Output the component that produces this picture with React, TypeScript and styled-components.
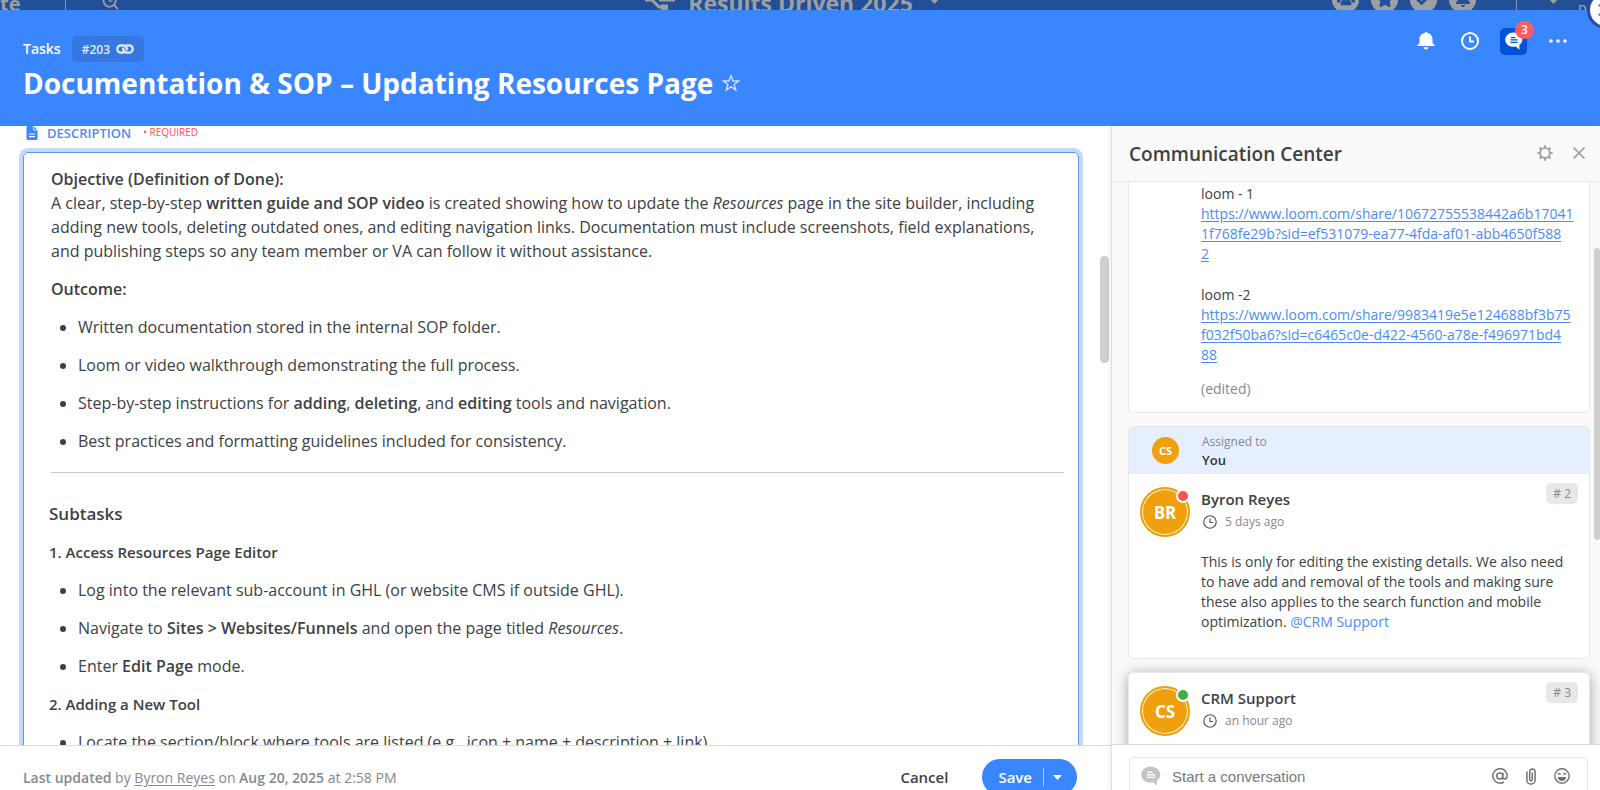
import React from 'react';
import styled, { createGlobalStyle } from 'styled-components';
import {
  FaBell,
  FaCheck,
  FaStar,
  FaUsers,
} from 'react-icons/fa';

const GlobalStyle = createGlobalStyle`
  * { box-sizing: border-box; }
  body {
    margin: 0;
    overflow: hidden;
    font-family: "Open Sans", "Noto Sans", sans-serif;
    color: #3c4145;
    background: #fff;
  }
  button { font-family: inherit; border: 0; padding: 0; background: none; cursor: pointer; }
  h1, h2, h3, h4, p, ul { margin: 0; padding: 0; }
  svg { display: block; flex: none; }
`;

const Page = styled.div`
  height: 100vh;
  display: flex;
  flex-direction: column;
  overflow: hidden;
  position: relative;
`;

/* Dimmed application bar behind the task window */
const TopBar = styled.div`
  flex: 0 0 10px;
  overflow: hidden;
  background: #224f98;
  color: #9c9fa3;
`;

const TopBarInner = styled.div`
  height: 58px;
  margin-top: -26px;
  display: grid;
  grid-template-columns: 1fr auto 1fr;
  align-items: center;
  font-weight: 700;
  font-size: 20px;
`;

const TopGroup = styled.div<{ $gap: number; $end?: boolean }>`
  display: flex;
  align-items: center;
  gap: ${(p) => p.$gap}px;
  justify-content: ${(p) => (p.$end ? 'flex-end' : 'flex-start')};
`;

const Board = styled.div`
  display: flex;
  align-items: center;
  gap: 12px;
  padding-right: 16px;
  font-size: 23px;

  svg:last-child { margin: 0 0 4px 5px; }
`;

const BarDivider = styled.span`
  width: 1px;
  height: 54px;
  background: #7f95bb;
`;

const SearchSlot = styled.span`
  padding: 0 0 4px 20px;
`;

const RoundIcon = styled.span`
  width: 27px;
  height: 27px;
  border-radius: 50%;
  background: #9c9fa3;
  color: #224f98;
  display: grid;
  place-items: center;
  margin-bottom: 8px;
`;

const AccountMenu = styled.div`
  display: flex;
  align-items: center;
  gap: 32px;
  padding: 0 8px 0 28px;

  svg { margin-bottom: 4px; }
`;

const UserSlot = styled.span`
  display: flex;
  flex-direction: column;
  width: 22px;
  overflow: hidden;
  font-size: 12px;
  line-height: 14px;
  font-weight: 600;
`;

const CloseTab = styled.button`
  position: absolute;
  top: -6px;
  right: -22px;
  width: 32px;
  height: 32px;
  border-radius: 50%;
  background: #fff;
  box-shadow: 0 0 0 3px #224f98;
  z-index: 2;
  color: #3a86ff;
  text-align: left;
  padding-left: 8px;
`;

const Header = styled.header`
  flex: 0 0 116px;
  background: #3a86ff;
  color: #fff;
  display: flex;
  justify-content: space-between;
  padding: 16px 29px 0 23px;
`;

const Heading = styled.div`
  padding-top: 10px;
`;

const Crumbs = styled.div`
  display: flex;
  align-items: center;
  gap: 11px;
  font-size: 14px;
  font-weight: 600;
  line-height: 20px;
`;

const IdTag = styled.button`
  height: 26px;
  padding: 0 10px;
  border-radius: 5px;
  background: #3677e0;
  color: #e3edff;
  display: flex;
  align-items: center;
  gap: 6px;
  font-size: 12px;
  font-weight: 600;
`;

const TitleRow = styled.div`
  display: flex;
  align-items: center;
  gap: 9px;
`;

const Title = styled.h1`
  font-size: 28px;
  line-height: 42px;
  font-weight: 700;
`;

const HeaderActions = styled.div`
  display: flex;
  align-items: center;
  height: 30px;
  gap: 17px;
`;

const HeaderButton = styled.button<{ $active?: boolean }>`
  position: relative;
  width: 27px;
  height: 27px;
  border-radius: 5px;
  background: ${(p) => (p.$active ? '#0052d9' : 'transparent')};
  color: #fff;
  display: grid;
  place-items: center;
`;

const Count = styled.span`
  position: absolute;
  top: -7px;
  right: -7px;
  width: 19px;
  height: 18px;
  border-radius: 9px;
  background: #ff5b60;
  color: #fff;
  font-size: 12px;
  font-weight: 600;
  line-height: 18px;
`;

const Body = styled.div`
  flex: 1;
  min-height: 0;
  display: grid;
  grid-template-columns: minmax(0, 1fr) 489px;
`;

const Main = styled.main`
  min-height: 0;
  display: flex;
  flex-direction: column;
  position: relative;
`;

const Scroll = styled.div`
  flex: 1;
  min-height: 0;
  overflow: hidden;
  padding: 0 32px 0 23px;
`;

const FieldLabel = styled.div`
  display: flex;
  align-items: center;
  height: 14px;
  padding-left: 3px;
  color: #4a8cf5;
`;

const FieldName = styled.h2`
  margin-left: 9px;
  font-size: 13px;
  line-height: 14px;
  font-weight: 600;
`;

const Required = styled.span`
  margin-left: 12px;
  padding-bottom: 2px;
  font-size: 10px;
  line-height: 12px;
  font-weight: 500;
  color: #ff4d52;
`;

const Editor = styled.div`
  margin-top: 12px;
  border: 1px solid #5c96f0;
  border-radius: 5px;
  box-shadow: 0 0 0 4px #c2dafc;
  padding: 14px 14px 40px 27px;
  font-size: 16px;
  line-height: 24px;

  strong { font-weight: 600; }
`;

const Text = styled.p`
  margin-bottom: 14px;
`;

const List = styled.ul`
  padding-left: 27px;
  display: flex;
  flex-direction: column;
  gap: 14px;
  list-style: disc;
`;

const Rule = styled.hr`
  border: 0;
  border-top: 1px solid #c8cbcd;
  margin: 19px 0 29px;
`;

const SectionTitle = styled.h3`
  margin: 0 0 14px -2px;
  font-size: 17px;
  line-height: 24px;
  font-weight: 600;
`;

const StepTitle = styled.h4`
  margin: 14px 0 14px -2px;
  font-size: 15px;
  line-height: 24px;
  font-weight: 600;
`;

const Thumb = styled.div<{ $top: number; $right: number; $w: number; $h: number }>`
  position: absolute;
  top: ${(p) => p.$top}px;
  right: ${(p) => p.$right}px;
  width: ${(p) => p.$w}px;
  height: ${(p) => p.$h}px;
  border-radius: 5px;
  background: #cfcfcf;
`;

const Footer = styled.footer`
  flex: none;
  height: 45px;
  border-top: 1px solid #d9dbde;
  display: flex;
  align-items: flex-start;
  justify-content: space-between;
  padding: 13px 34px 0 23px;
  font-size: 14px;
  color: #85898d;
`;

const Updated = styled.p`
  line-height: 38px;

  strong { font-weight: 600; }
  a { color: inherit; text-underline-offset: 2px; }
`;

const FooterActions = styled.div`
  display: flex;
  gap: 34px;
`;

const Cancel = styled.button`
  height: 36px;
  font-size: 15px;
  font-weight: 600;
  color: #3c4145;
`;

const SaveGroup = styled.div`
  display: flex;
  height: 36px;
  border-radius: 18px;
  background: #3a86ff;
  color: #fff;
  align-items: center;
`;

const Save = styled.button`
  color: #fff;
  font-size: 15px;
  font-weight: 600;
  line-height: 18px;
  padding: 0 11px 0 16px;
  border-right: 1px solid #a9cbff;
`;

const SaveMore = styled.button`
  color: #fff;
  padding: 0 15px 0 9px;
`;

const Side = styled.aside`
  min-height: 0;
  display: flex;
  flex-direction: column;
  background: #fafafa;
  border-left: 1px solid #dcdee0;
  box-shadow: -2px 0 4px rgba(0, 0, 0, 0.06);
  position: relative;
`;

const SideHeader = styled.div`
  flex: 0 0 56px;
  display: flex;
  align-items: center;
  justify-content: space-between;
  padding: 0 15px 0 17px;
  border-bottom: 1px solid #e8e9eb;
`;

const SideTitle = styled.h2`
  font-size: 19px;
  line-height: 28px;
  font-weight: 600;
`;

const SideTools = styled.div`
  display: flex;
  align-items: center;
  gap: 20px;
  padding-bottom: 2px;

  button { color: #a2a5a8; }
`;

const Thread = styled.div`
  flex: 1;
  min-height: 0;
  overflow: hidden;
  padding: 0 10px 0 16px;
  display: flex;
  flex-direction: column;
  gap: 13px;
`;

const Card = styled.article<{ $cut?: boolean; $raised?: boolean }>`
  flex: none;
  background: #fff;
  border: 1px solid #e6e8ea;
  border-top-width: ${(p) => (p.$cut ? 0 : 1)}px;
  border-radius: ${(p) => (p.$cut ? '0 0 5px 5px' : '5px')};
  box-shadow: ${(p) => (p.$raised ? '0 2px 14px rgba(0, 0, 0, 0.35)' : 'none')};
  overflow: hidden;
`;

const Message = styled.div`
  padding: 2px 20px 13px 72px;
  font-size: 14px;
  line-height: 20px;
  display: flex;
  flex-direction: column;

  a { color: #4a8cf5; text-underline-offset: 2px; }
  p + p { margin-top: 21px; }
`;

const Edited = styled.span`
  margin-top: 14px;
  color: #85898d;
`;

const Assigned = styled.div`
  display: flex;
  align-items: center;
  height: 47px;
  padding-left: 23px;
  background: #e6efff;
`;

const AssignedText = styled.div`
  margin-left: 23px;
  font-size: 12px;
  line-height: 19px;
  color: #85898d;

  strong { display: block; font-size: 13px; font-weight: 600; color: #2e3336; }
`;

const SmallAvatar = styled.span`
  width: 27px;
  height: 27px;
  border-radius: 50%;
  background: #f0a00c;
  color: #fff;
  font-size: 11px;
  font-weight: 700;
  display: grid;
  place-items: center;
`;

const Entry = styled.div`
  display: flex;
  padding: 13px 11px 0 11px;
`;

const Avatar = styled.span`
  position: relative;
  width: 50px;
  height: 50px;
  border-radius: 50%;
  border: 2px solid #f0a00c;
  background: #f0a00c;
  box-shadow: inset 0 0 0 1px #fff;
  color: #fff;
  font-size: 17px;
  font-weight: 700;
  display: grid;
  place-items: center;
`;

const Presence = styled.i<{ $color: string }>`
  position: absolute;
  top: 0;
  right: -2px;
  width: 14px;
  height: 14px;
  border-radius: 50%;
  border: 2px solid #fff;
  background: ${(p) => p.$color};
`;

const Who = styled.div`
  flex: 1;
  margin-left: 11px;
`;

const Name = styled.h3`
  font-size: 15px;
  line-height: 24px;
  font-weight: 600;
`;

const When = styled.div`
  display: flex;
  align-items: center;
  gap: 8px;
  padding-left: 2px;
  font-size: 12px;
  line-height: 22px;
  color: #85898d;

  svg { color: #4d5256; }
`;

const Num = styled.span`
  height: 21px;
  padding: 0 7px;
  border-radius: 5px;
  margin-top: -4px;
  background: #e8e8e8;
  color: #85898d;
  font-size: 12px;
  line-height: 21px;
`;

const Comment = styled.div`
  padding: 15px 20px 26px 72px;
  font-size: 14px;
  line-height: 20px;

  a { color: #4a8cf5; text-decoration: none; }
`;

const Composer = styled.form`
  flex: none;
  height: 46px;
  background: #fff;
  border-top: 1px solid #d9dbde;
  padding: 12px 12px 0 17px;
`;

const ComposerBox = styled.label`
  display: flex;
  align-items: center;
  height: 38px;
  border: 1px solid #e2e4e6;
  border-radius: 5px;
  padding: 0 17px 0 11px;
  color: #c2c4c6;

  input {
    flex: 1;
    min-width: 0;
    border: 0;
    outline: 0;
    margin-left: 11px;
    padding: 0;
    background: none;
    font: 15px "Liberation Sans", sans-serif;
  }
  input::placeholder { color: #77797c; opacity: 1; }
`;

const ComposerTools = styled.span`
  display: flex;
  align-items: center;
  gap: 18px;

  button { color: #6f7275; }
`;

const ClockIcon = ({ size, stroke = 2 }: { size: number; stroke?: number }) => (
  <svg width={size} height={size} viewBox="0 0 18 18" fill="none" stroke="currentColor" strokeWidth={stroke}>
    <circle cx="9" cy="9" r="8" />
    <path d="M9 4.5V9.6H13" />
  </svg>
);

const LinkIcon = () => (
  <svg width="18" height="10" viewBox="0 0 18 10" fill="none" stroke="currentColor" strokeWidth="2.300" strokeLinecap="round">
    <path d="M7.300 8.700H5A3.700 3.700 0 0 1 5 1.300H6.500C9 1.300 10.600 3 10.800 5.300" />
    <path d="M10.700 1.300H13A3.700 3.700 0 0 1 13 8.700H11.500C9 8.700 7.400 7 7.200 4.700" />
  </svg>
);

const BubbleIcon = ({ size, lines }: { size: number; lines: string }) => (
  <svg width={size} height={size} viewBox="0 0 20 20">
    <path d="M9.500 0.500C4.300 0.500 0.300 4.100 0.300 8.700S4.300 16.500 9.500 16.500C10.400 16.500 11.300 16.400 12.100 16.200L16 19.600V14.300C18 13 19.300 11 19.300 8.700C19.300 4.100 14.900 0.500 9.500 0.500Z" fill="currentColor" />
    <path d="M6.500 6.200H11.500M6 8.800H14M6 11.400H14" stroke={lines} strokeWidth="1.400" />
  </svg>
);

const DotsIcon = () => (
  <svg width="18" height="4" viewBox="0 0 18 4" fill="currentColor">
    <circle cx="2" cy="2" r="1.800" />
    <circle cx="9" cy="2" r="1.800" />
    <circle cx="16" cy="2" r="1.800" />
  </svg>
);

const StarIcon = () => (
  <svg width="18" height="18" viewBox="0 0 18 18" fill="none" stroke="#cfe0ff" strokeWidth="1.400">
    <path d="M9 1.800L11 7H16.400L12.100 10.400L13.700 16L9 12.700L4.300 16L5.900 10.400L1.600 7H7Z" />
  </svg>
);

const FileIcon = () => (
  <svg width="12" height="14" viewBox="0 0 11 14">
    <path d="M1.500 0H7L11 4V12.500A1.500 1.500 0 0 1 9.500 14H1.500A1.500 1.500 0 0 1 0 12.500V1.500A1.500 1.500 0 0 1 1.500 0Z" fill="#3a86ff" />
    <path d="M7 0V4H11" stroke="#fff" fill="none" strokeWidth="0.800" />
    <path d="M2.500 8H8.500M2.500 10.600H8.500" stroke="#fff" strokeWidth="1.100" />
  </svg>
);

const GearIcon = () => (
  <svg width="16" height="16" viewBox="0 0 16 16" fill="none" stroke="currentColor">
    <circle cx="8" cy="8" r="4.900" strokeWidth="1.900" />
    <path d="M8 0.300V3M8 13V15.700M0.300 8H3M13 8H15.700M2.600 2.600L4.400 4.400M11.600 11.600L13.400 13.400M2.600 13.400L4.400 11.600M11.600 4.400L13.400 2.600" strokeWidth="2.200" />
  </svg>
);

const CrossIcon = () => (
  <svg width="12" height="12" viewBox="0 0 12 12" stroke="currentColor" strokeWidth="1.800">
    <path d="M0.500 0.500L11.500 11.500M11.500 0.500L0.500 11.500" />
  </svg>
);

const AtIcon = () => (
  <svg width="16" height="16" viewBox="0 0 16 16" fill="none" stroke="currentColor" strokeWidth="1.500">
    <circle cx="7.800" cy="8" r="3" />
    <path d="M11 4.700L10.600 9C10.500 10.500 11.400 11.100 12.400 11.100C14 11.100 15.200 9.700 15.200 7.600A7.200 7.200 0 1 0 11.800 14" />
  </svg>
);

const ClipIcon = () => (
  <svg width="10" height="17" viewBox="0 0 10 17" fill="none" stroke="currentColor" strokeWidth="1.500">
    <path d="M0.900 3.500V12A4.100 4.100 0 0 0 9.100 12V3.600A2.700 2.700 0 0 0 3.700 3.600V11.600A1.300 1.300 0 0 0 6.300 11.600V4.600" />
  </svg>
);

const SmileIcon = () => (
  <svg width="16" height="16" viewBox="0 0 16 16" fill="none" stroke="currentColor" strokeWidth="1.400">
    <circle cx="8" cy="8" r="7.200" />
    <path d="M3.800 9H12.200C12 11.500 10.300 12.900 8 12.900S4 11.500 3.800 9Z" fill="currentColor" stroke="none" />
    <path d="M4 6.600C4.500 5.200 6 5.200 6.500 6.600M9.500 6.600C10 5.200 11.500 5.200 12 6.600" />
  </svg>
);

const SearchIcon = () => (
  <svg width="17" height="17" viewBox="0 0 18 18" fill="none" stroke="currentColor" strokeWidth="2">
    <circle cx="8" cy="8" r="6.500" />
    <path d="M13 13L17 17" />
    <path d="M8 4.500V8.500H11" strokeWidth="1.300" />
  </svg>
);

const FlowIcon = () => (
  <svg width="31" height="20" viewBox="0 0 31 20" fill="none" stroke="currentColor" strokeWidth="3">
    <path d="M0 7H7L14 14H21" />
    <path d="M14 7H30" />
    <path d="M16 14.500H23" strokeWidth="6" />
  </svg>
);

const Caret = () => (
  <svg width="9" height="5" viewBox="0 0 9 5" fill="currentColor">
    <path d="M0 0H9L4.500 5Z" />
  </svg>
);

type EntryProps = { initials: string; name: string; when: string; num: number; presence: string };

const EntryHead = ({ initials, name, when, num, presence }: EntryProps) => (
  <Entry>
    <Avatar>
      {initials}
      <Presence $color={presence} />
    </Avatar>
    <Who>
      <Name>{name}</Name>
      <When>
        <ClockIcon size={14} stroke={1.5} />
        {when}
      </When>
    </Who>
    <Num># {num}</Num>
  </Entry>
);

export default function App() {
  return (
    <>
      <GlobalStyle />
      <Page>
        <TopBar>
          <TopBarInner>
            <TopGroup $gap={16}>
              <TopGroup $gap={44}>
                <span>te</span>
                <BarDivider />
              </TopGroup>
              <SearchSlot>
                <SearchIcon />
              </SearchSlot>
            </TopGroup>
            <Board>
              <FlowIcon />
              <span>Results Driven 2025</span>
              <Caret />
            </Board>
            <TopGroup $gap={12} $end>
              <RoundIcon><FaUsers size={18} /></RoundIcon>
              <RoundIcon><FaStar size={18} /></RoundIcon>
              <RoundIcon><FaCheck size={15} /></RoundIcon>
              <RoundIcon><FaBell size={16} /></RoundIcon>
              <AccountMenu>
                <BarDivider />
                <Caret />
              </AccountMenu>
              <UserSlot>
                <span>CR</span>
                <span>Des</span>
              </UserSlot>
            </TopGroup>
          </TopBarInner>
        </TopBar>
        <CloseTab aria-label="Close task">
          <CrossIcon />
        </CloseTab>

        <Header>
          <Heading>
            <Crumbs>
              <span>Tasks</span>
              <IdTag>
                #203
                <LinkIcon />
              </IdTag>
            </Crumbs>
            <TitleRow>
              <Title>Documentation &amp; SOP – Updating Resources Page</Title>
              <button aria-label="Add to favorites">
                <StarIcon />
              </button>
            </TitleRow>
          </Heading>
          <HeaderActions>
            <HeaderButton aria-label="Notifications">
              <svg width="18" height="18" viewBox="0 0 18 18" fill="currentColor">
                <path d="M9 0C9.800 0 10.200 0.500 10.200 1C13.500 1.500 15.500 4 15.500 7V10.500C15.500 11.600 17 12.200 17.800 13.200V14H0.200V13.200C1 12.200 2.500 11.600 2.500 10.500V7C2.500 4 4.500 1.500 7.800 1C7.800 0.500 8.200 0 9 0Z" />
                <path d="M6.700 15.300H11.300A2.300 2.300 0 0 1 6.700 15.300Z" />
              </svg>
            </HeaderButton>
            <HeaderButton aria-label="Time log">
              <ClockIcon size={18} />
            </HeaderButton>
            <HeaderButton $active aria-label="Conversations">
              <BubbleIcon size={18} lines="#0052d9" />
              <Count>3</Count>
            </HeaderButton>
            <HeaderButton aria-label="More options">
              <DotsIcon />
            </HeaderButton>
          </HeaderActions>
        </Header>

        <Body>
          <Main>
            <Scroll>
              <FieldLabel>
                <FileIcon />
                <FieldName>DESCRIPTION</FieldName>
                <Required>• REQUIRED</Required>
              </FieldLabel>
              <Editor>
                <Text>
                  <strong>Objective (Definition of Done):</strong>
                  <br />
                  A clear, step-by-step <strong>written guide and SOP video</strong> is created showing how to update the{' '}
                  <em>Resources</em> page in the site builder, including
                  <br />
                  adding new tools, deleting outdated ones, and editing navigation links. Documentation must include
                  screenshots, field explanations,
                  <br />
                  and publishing steps so any team member or VA can follow it without assistance.
                </Text>
                <Text>
                  <strong>Outcome:</strong>
                </Text>
                <List>
                  <li>Written documentation stored in the internal SOP folder.</li>
                  <li>Loom or video walkthrough demonstrating the full process.</li>
                  <li>
                    Step-by-step instructions for <strong>adding</strong>, <strong>deleting</strong>, and{' '}
                    <strong>editing</strong> tools and navigation.
                  </li>
                  <li>Best practices and formatting guidelines included for consistency.</li>
                </List>
                <Rule />
                <SectionTitle>Subtasks</SectionTitle>
                <StepTitle>1. Access Resources Page Editor</StepTitle>
                <List>
                  <li>Log into the relevant sub-account in GHL (or website CMS if outside GHL).</li>
                  <li>
                    Navigate to <strong>Sites &gt; Websites/Funnels</strong> and open the page titled <em>Resources</em>.
                  </li>
                  <li>
                    Enter <strong>Edit Page</strong> mode.
                  </li>
                </List>
                <StepTitle>2. Adding a New Tool</StepTitle>
                <List>
                  <li>Locate the section/block where tools are listed (e.g., icon + name + description + link).</li>
                </List>
              </Editor>
            </Scroll>
            <Thumb $top={130} $right={2} $w={9} $h={107} />
            <Footer>
              <Updated>
                <strong>Last updated</strong> by <a href="#byron">Byron Reyes</a> on <strong>Aug 20, 2025</strong> at 2:58 PM
              </Updated>
              <FooterActions>
                <Cancel>Cancel</Cancel>
                <SaveGroup>
                  <Save>Save</Save>
                  <SaveMore aria-label="More save options">
                    <Caret />
                  </SaveMore>
                </SaveGroup>
              </FooterActions>
            </Footer>
          </Main>

          <Side>
            <SideHeader>
              <SideTitle>Communication Center</SideTitle>
              <SideTools>
                <button aria-label="Settings"><GearIcon /></button>
                <button aria-label="Close panel"><CrossIcon /></button>
              </SideTools>
            </SideHeader>
            <Thread>
              <Card $cut>
                <Message>
                  <p>
                    loom - 1<br />
                    <a href="#loom-1">
                      https://www.loom.com/share/10672755538442a6b17041
                      <br />
                      1f768fe29b?sid=ef531079-ea77-4fda-af01-abb4650f588
                      <br />2
                    </a>
                  </p>
                  <p>
                    loom -2
                    <br />
                    <a href="#loom-2">
                      https://www.loom.com/share/9983419e5e124688bf3b75
                      <br />
                      f032f50ba6?sid=c6465c0e-d422-4560-a78e-f496971bd4
                      <br />
                      88
                    </a>
                  </p>
                  <Edited>(edited)</Edited>
                </Message>
              </Card>
              <Card>
                <Assigned>
                  <SmallAvatar>CS</SmallAvatar>
                  <AssignedText>
                    Assigned to
                    <strong>You</strong>
                  </AssignedText>
                </Assigned>
                <EntryHead initials="BR" name="Byron Reyes" when="5 days ago" num={2} presence="#ff5252" />
                <Comment>
                  This is only for editing the existing details. We also need
                  <br />
                  to have add and removal of the tools and making sure
                  <br />
                  these also applies to the search function and mobile
                  <br />
                  optimization. <a href="#crm">@CRM Support</a>
                </Comment>
              </Card>
              <Card $raised>
                <EntryHead initials="CS" name="CRM Support" when="an hour ago" num={3} presence="#3fae49" />
                <Comment />
              </Card>
            </Thread>
            <Thumb $top={122} $right={0} $w={6} $h={292} />
            <Composer>
              <ComposerBox>
                <BubbleIcon size={20} lines="#fff" />
                <input type="text" aria-label="Start a conversation" placeholder="Start a conversation" />
                <ComposerTools>
                  <button type="button" aria-label="Mention"><AtIcon /></button>
                  <button type="button" aria-label="Attach file"><ClipIcon /></button>
                  <button type="button" aria-label="Emoji"><SmileIcon /></button>
                </ComposerTools>
              </ComposerBox>
            </Composer>
          </Side>
        </Body>
      </Page>
    </>
  );
}
